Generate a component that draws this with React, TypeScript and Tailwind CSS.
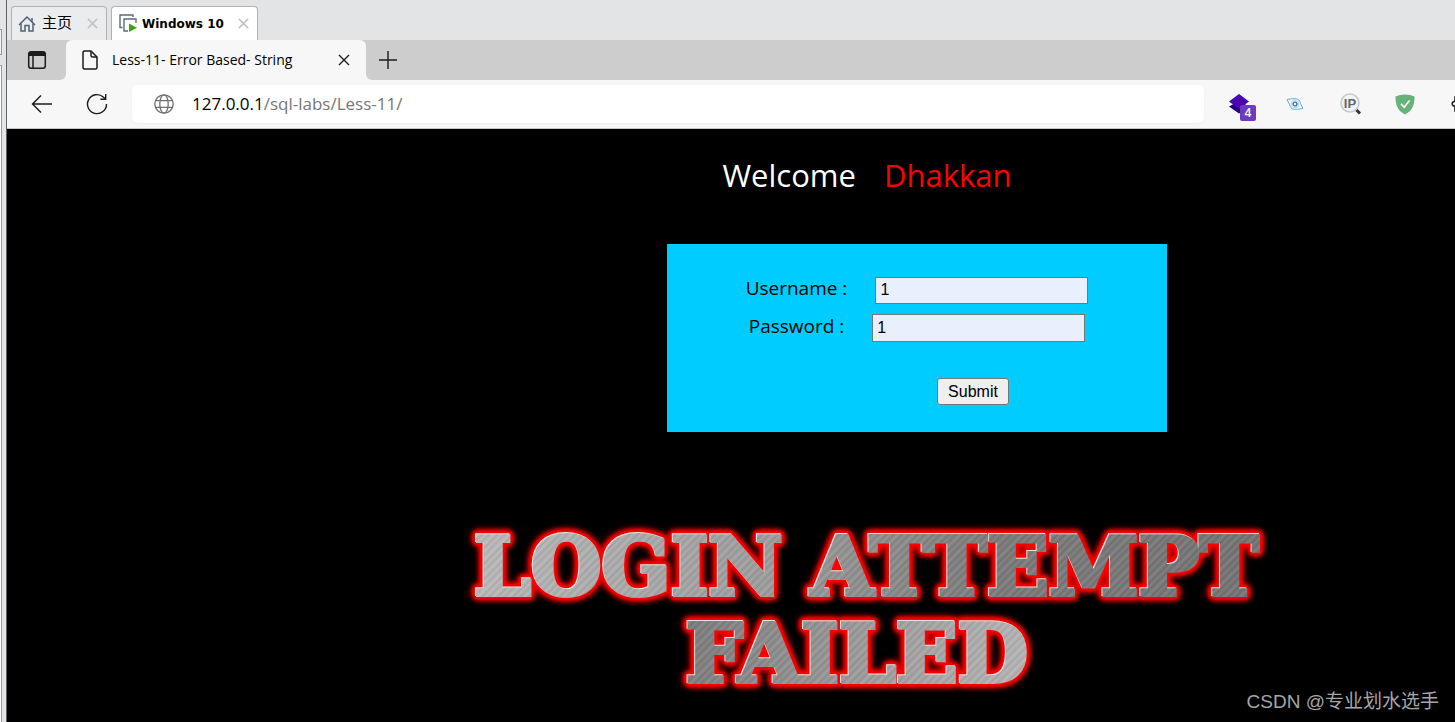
import type { ReactNode } from 'react';

const UI_FONT = "font-['Open_Sans','Noto_Sans_CJK_SC',sans-serif]";

function HomeIcon() {
  return (
    <svg width="18" height="18" viewBox="0 0 18 18" fill="none" stroke="#4f6173" strokeWidth="1.5">
      <path d="M1 10 9 2l8 8" />
      <path d="M3 8.500V16h4v-5.500h4V16h4V8.500" />
      <path d="M14 7V3" />
    </svg>
  );
}

function MachineIcon() {
  return (
    <svg width="19" height="19" viewBox="0 0 19 19" fill="none" stroke="#5b6b7b" strokeWidth="1.4">
      <path d="M3.500 13.500H1V1h13v2" />
      <path d="M9 17H5V5h12v4" />
      <path d="M10 9.500v8.500l8-4.200z" fill="#45a010" stroke="none" />
    </svg>
  );
}

function CrossIcon({ size, color, width }: { size: number; color: string; width: number }) {
  return (
    <svg width={size} height={size} viewBox="0 0 12 12" fill="none" stroke={color} strokeWidth={width}>
      <path d="M1 1l10 10M11 1L1 11" />
    </svg>
  );
}

function SidebarIcon() {
  return (
    <svg width="20" height="20" viewBox="0 0 20 20" fill="none" stroke="#1b1b1b" strokeWidth="1.5">
      <rect x="1.700" y="1.700" width="16.600" height="16.600" rx="2.500" />
      <path d="M2 2h16v4H2z" fill="#1b1b1b" stroke="none" />
      <path d="M6 5v13" />
    </svg>
  );
}

function PageIcon() {
  return (
    <svg width="16" height="20" viewBox="0 0 16 20" fill="none" stroke="#1b1b1b" strokeWidth="1.500" strokeLinejoin="round">
      <path d="M2.500 1h6.500l6 6v10.500a1.500 1.500 0 0 1-1.500 1.500h-11A1.500 1.500 0 0 1 1 17.500v-15A1.500 1.500 0 0 1 2.500 1z" />
      <path d="M9 1v4.500A1.500 1.500 0 0 0 10.500 7H15" />
    </svg>
  );
}

function BackIcon() {
  return (
    <svg width="22" height="20" viewBox="0 0 22 20" fill="none" stroke="#1b1b1b" strokeWidth="1.400">
      <path d="M21 10H1.500M10 1.500 1.500 10l8.500 8.500" />
    </svg>
  );
}

function ReloadIcon() {
  return (
    <svg width="22" height="22" viewBox="0 0 22 22" fill="none" stroke="#1b1b1b" strokeWidth="1.400">
      <path d="M20.500 11A9.500 9.500 0 1 1 17.500 4.200L19.500 6" />
      <path d="M19.700 1v5.300h-5.300" />
    </svg>
  );
}

function GlobeIcon() {
  return (
    <svg width="20" height="20" viewBox="0 0 20 20" fill="none" stroke="#707070" strokeWidth="1.300">
      <circle cx="10" cy="10" r="9.200" />
      <ellipse cx="10" cy="10" rx="4.200" ry="9.200" />
      <path d="M1.500 6.700h17M1.500 13.300h17" />
    </svg>
  );
}

function LayersIcon() {
  return (
    <svg width="22" height="22" viewBox="0 0 22 22">
      <path d="M1 13.500 11 8l10 5.500-10 7z" fill="#26007a" />
      <path d="M1 8.500 11 1l10 7.500L11 16z" fill="#4a05b0" />
    </svg>
  );
}

function EyeIcon() {
  return (
    <svg width="18" height="12" viewBox="0 0 18 12" fill="none" stroke="#62b0e0" strokeWidth="1">
      <path d="M1 1.500C4 .8 6.500.7 9 .7c3.500 0 5 2 5.500 4.800L17 10.500c-3 .6-5.500.8-8 .8-3.500 0-5-2-5.500-4.800z" />
      <path d="M5.200 6c0-5 7.600-5 7.600 0s-7.600 5-7.600 0z" strokeOpacity="0.5" />
      <circle cx="9" cy="6" r="1.900" stroke="#3d74ad" strokeWidth="1.400" />
    </svg>
  );
}

function IpIcon() {
  return (
    <svg width="22" height="22" viewBox="0 0 22 22">
      <circle cx="10" cy="10" r="9" fill="#f1f3f4" stroke="#c3ccd2" strokeWidth="1.600" />
      <path d="m16.500 17 3.500 3.500" stroke="#333" strokeWidth="3" />
      <text x="10" y="15" textAnchor="middle" fontSize="13" fontWeight="900" fill="#666" fontFamily="Liberation Sans">
        IP
      </text>
    </svg>
  );
}

function ShieldIcon() {
  return (
    <svg width="20" height="21" viewBox="0 0 20 21">
      <path d="M10 0.500c3 0 7 .8 9.500 2 0 8-1.500 13.500-9.500 18C2 16 .5 10.500.5 2.500 3 1.300 7 .5 10 .5z" fill="#67b279" />
      <path d="m6 9.800 3.200 3.400L14.500 6.500" fill="none" stroke="#fff" strokeWidth="1.700" />
    </svg>
  );
}

function PuzzleIcon() {
  return (
    <svg width="20" height="20" viewBox="0 0 20 20" fill="none" stroke="#1b1b1b" strokeWidth="1.600">
      <path d="M4 3h4a2 2 0 0 1 4 0h5v5a2 2 0 0 1 0 4v5H4v-5a2.300 2.300 0 1 1 0-4.500z" />
    </svg>
  );
}

function IconButton({ label, className, children }: { label: string; className?: string; children: ReactNode }) {
  return (
    <button aria-label={label} className={`flex shrink-0 items-center justify-center ${className ?? ''}`}>
      {children}
    </button>
  );
}

// Virtual machine tabs above the guest screen
function MachineTabs() {
  return (
    <div className="flex h-10 items-end gap-1 pl-1">
      <div className="flex h-[34px] w-24 items-center rounded-t border border-b-0 border-[#b0b2b5] bg-[#ebecee] pl-1.5">
        <HomeIcon />
        <span className="ml-1.5 pb-1 text-[15px] leading-5">主页</span>
        <IconButton label="Close home" className="ml-auto mr-2">
          <CrossIcon size={11} color="#c4c4c4" width={1.800} />
        </IconButton>
      </div>
      <div className="flex h-[34px] w-[147px] items-center rounded-t border border-b-0 border-[#b0b2b5] bg-white pl-[7px]">
        <MachineIcon />
        <span className="ml-1 font-['DejaVu_Sans',sans-serif] text-[12px] font-bold leading-5">Windows 10</span>
        <IconButton label="Close Windows 10" className="ml-auto mr-2">
          <CrossIcon size={11} color="#c4c4c4" width={1.800} />
        </IconButton>
      </div>
    </div>
  );
}

function BrowserTabs() {
  return (
    <div className="flex h-10 items-stretch bg-[#cdcdcd]">
      <IconButton label="Tab actions" className="w-[59px]">
        <SidebarIcon />
      </IconButton>
      <div className="relative flex w-[300px] items-center rounded-t-md bg-[#f7f7f7] pl-4">
        <div className="absolute -left-1.5 bottom-0 size-1.5 bg-[#f7f7f7]">
          <div className="size-1.5 rounded-br-md bg-[#cdcdcd]" />
        </div>
        <PageIcon />
        <span className="ml-3.5 text-[14px] leading-5">Less-11- Error Based- String</span>
        <IconButton label="Close tab" className="ml-auto mr-4">
          <CrossIcon size={12} color="#1b1b1b" width={1.400} />
        </IconButton>
        <div className="absolute -right-1.5 bottom-0 size-1.5 bg-[#f7f7f7]">
          <div className="size-1.5 rounded-bl-md bg-[#cdcdcd]" />
        </div>
      </div>
      <IconButton label="New tab" className="ml-3">
        <svg width="20" height="20" viewBox="0 0 20 20" stroke="#1b1b1b" strokeWidth="1.400">
          <path d="M10 1v18M1 10h18" />
        </svg>
      </IconButton>
    </div>
  );
}

function Toolbar() {
  return (
    <div className="flex h-[49px] items-center overflow-hidden border-b border-[#c4c4c4] bg-[#f7f7f7] pl-6">
      <IconButton label="Back">
        <BackIcon />
      </IconButton>
      <IconButton label="Reload" className="ml-[33px]">
        <ReloadIcon />
      </IconButton>
      <div className="ml-6 flex h-[38px] flex-1 items-center rounded-md bg-white pl-[22px] shadow-xs">
        <GlobeIcon />
        <a href="#address" className="ml-[18px] text-[17px] leading-6 text-[#767676]">
          <span className="text-black">127.0.0.1</span>/sql-labs/Less-11/
        </a>
      </div>
      <div className="flex shrink-0 items-center pl-6">
        <IconButton label="Layers" className="relative">
          <LayersIcon />
          <span className="absolute -bottom-1.5 -right-1.5 flex size-4 items-center justify-center rounded-xs bg-[#6c3cc0] text-[12px] font-semibold leading-4 text-white">
            4
          </span>
        </IconButton>
        <IconButton label="Eye" className="ml-9">
          <EyeIcon />
        </IconButton>
        <IconButton label="IP lookup" className="ml-9">
          <IpIcon />
        </IconButton>
        <IconButton label="Protection" className="ml-[33px]">
          <ShieldIcon />
        </IconButton>
        <IconButton label="Extensions" className="-mr-4 ml-9">
          <PuzzleIcon />
        </IconButton>
      </div>
    </div>
  );
}

function LoginForm() {
  const field = "w-[213px] border border-[#767676] bg-[#e8f0fe] px-1 font-['Liberation_Sans',sans-serif] text-[16px]";
  return (
    <form
      className="flex w-[500px] flex-col items-center gap-[10px] bg-[#00ccff] pb-[27px] pt-[33px] text-[19px] text-black"
      onSubmit={(e) => e.preventDefault()}
    >
      <div className="flex items-start gap-7">
        <label htmlFor="uname" className="leading-[22px]">Username :</label>
        <input id="uname" type="text" defaultValue="1" className={`h-[27px] pb-0.5 ${field}`} />
      </div>
      <div className="flex items-start gap-7">
        <label htmlFor="passwd" className="leading-6">Password :</label>
        <input id="passwd" type="text" defaultValue="1" className={`h-7 ${field}`} />
      </div>
      <button
        type="submit"
        className="ml-28 mt-[26px] h-[27px] w-[72px] rounded-[3px] border border-[#767676] bg-[#efefef] font-['Liberation_Sans',sans-serif] text-[16px]"
      >
        Submit
      </button>
    </form>
  );
}

// Brushed steel lettering with a red glow
function FailedBanner() {
  const metal = 'bg-clip-text text-transparent [-webkit-text-stroke:4px_transparent]';
  return (
    <h2 className="flex flex-col items-center whitespace-nowrap font-['DejaVu_Serif',serif] text-[81px] font-bold leading-[87px] [filter:drop-shadow(-1px_-1px_0_#e8e8e8)_drop-shadow(0_0_2px_#f00)_drop-shadow(0_0_2px_#f00)_drop-shadow(0_0_2px_#f00)_drop-shadow(0_0_2px_#e00)]">
      <span
        className={`bg-[repeating-linear-gradient(135deg,#ffffff18_0px,#00000014_3px,#ffffff10_5px,#00000010_8px,#ffffff18_11px),linear-gradient(100deg,#bcbcbc,#9c9c9c_40%,#7c7c7c_65%,#747474)] ${metal}`}
      >
        LOGIN ATTEMPT
      </span>
      <span
        className={`mr-5 bg-[repeating-linear-gradient(135deg,#ffffff18_0px,#00000014_3px,#ffffff10_5px,#00000010_8px,#ffffff18_11px),linear-gradient(100deg,#7c7c7c,#9c9c9c_50%,#b8b8b8)] ${metal}`}
      >
        FAILED
      </span>
    </h2>
  );
}

export default function App() {
  return (
    <div className={`flex min-h-screen overflow-hidden bg-[#e3e4e6] text-black ${UI_FONT}`}>
      {/* Edge of the library panel */}
      <div className="flex w-[7px] shrink-0 flex-col gap-[10px] border-r border-[#5f6266] pr-1 pt-[29px]">
        <div className="h-[26px] border border-l-0 border-[#999] bg-[#f2f2f2]" />
        <div className="flex-1 border border-b-0 border-l-0 border-[#999] bg-white" />
      </div>
      <div className="flex min-w-0 flex-1 flex-col">
        <MachineTabs />
        <BrowserTabs />
        <Toolbar />
        <main className="relative flex flex-1 flex-col items-center bg-black pl-[272px]">
          <h1 className="mt-6 flex gap-7 text-[31px] leading-[44px] text-white">
            Welcome <span className="text-[#f00]">Dhakkan</span>
          </h1>
          <div className="ml-[100px] mt-[47px]">
            <LoginForm />
          </div>
          <div className="mt-[91px]">
            <FailedBanner />
          </div>
          <p className="absolute bottom-2 right-4 font-['Liberation_Sans','Noto_Sans_CJK_SC',sans-serif] text-[19px] leading-6 text-[#a6a6a6]">
            CSDN @专业划水选手
          </p>
        </main>
      </div>
    </div>
  );
}
